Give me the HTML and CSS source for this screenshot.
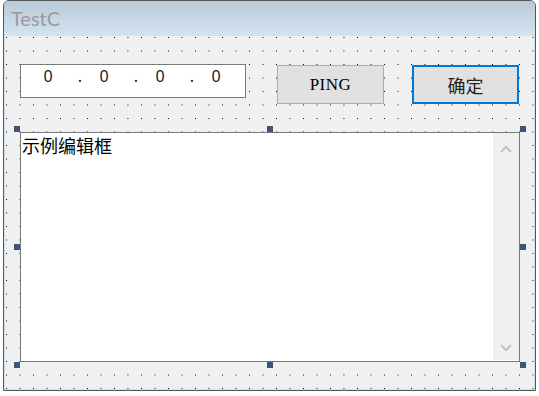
FILE: index.html
```html
<!DOCTYPE html>
<html lang="zh-CN">
<head>
    <meta charset="UTF-8">
    <meta name="viewport" content="width=device-width, initial-scale=1.0">
    <title>TestC</title>
    <link rel="stylesheet" href="styles.css">
</head>
<body>
    <div class="window">
        <div class="titlebar">
            <span class="title">TestC</span>
        </div>

        <div class="client">
            <div class="toprow">
                <div class="ipbox">
                    <span class="oct">0</span><span class="sep">.</span>
                    <span class="oct">0</span><span class="sep">.</span>
                    <span class="oct">0</span><span class="sep">.</span>
                    <span class="oct">0</span>
                </div>
                <button class="btn ping">PING</button>
                <button class="btn ok">确定</button>
            </div>

            <div class="editwrap">
                <div class="edit">
                    <div class="edit-text">示例编辑框</div>
                    <div class="scrollbar">
                        <svg width="12" height="8" viewBox="0 0 12 8"><polyline points="1,7 6,2 11,7" fill="none" stroke="#c2c2c2" stroke-width="2"/></svg>
                        <svg width="12" height="8" viewBox="0 0 12 8"><polyline points="1,1 6,6 11,1" fill="none" stroke="#c2c2c2" stroke-width="2"/></svg>
                    </div>
                </div>
                <!-- alças de seleção do editor -->
                <span class="handle h-tl"></span>
                <span class="handle h-tm"></span>
                <span class="handle h-tr"></span>
                <span class="handle h-ml"></span>
                <span class="handle h-mr"></span>
                <span class="handle h-bl"></span>
                <span class="handle h-bm"></span>
                <span class="handle h-br"></span>
            </div>
        </div>
    </div>
</body>
</html>
```

FILE: styles.css
```css
* {
    box-sizing: border-box;
}

body {
    margin: 0;
    padding: 0;
    background-color: #fff;
    font-family: 'Noto Sans', sans-serif;
}

.window {
    margin-left: 3px;
    width: 533px;
    height: 391px;
    border: 1px solid #555;
    border-radius: 6px 6px 0 0;
    display: flex;
    flex-direction: column;
    overflow: hidden;
}

.titlebar {
    height: 35px;
    flex-shrink: 0;
    padding: 1px 0 0 7px;
    background: linear-gradient(#b9c9d9, #d5e3f0);
}

.title {
    font-family: 'Lato', sans-serif;
    font-size: 20px;
    line-height: 33px;
    color: #9b9b9b;
}

.client {
    flex: 1;
    border: 1px solid #d4e1ee;
    border-top: 0;
    padding: 28px 0 0 15px;
    background-color: #f0f0f0;
    background-image: conic-gradient(at 1px 1px, transparent 75%, #000 0);
    background-size: 13.5px 13.5px;
    background-position: 1px 1px;
}

.toprow {
    display: flex;
    align-items: flex-start;
}

.ipbox {
    width: 226px;
    height: 34px;
    border: 1px solid #7a7a7a;
    background-color: #fff;
    display: flex;
    padding: 1px 0 0 19px;
    font-family: 'Noto Sans', sans-serif;
    font-size: 16px;
    line-height: 20px;
    color: #141c2c;
}

.oct {
    width: 16px;
    text-align: center;
}

.sep {
    width: 8px;
    margin-left: 20px;
    text-align: center;
}

.sep + .oct {
    margin-left: 12px;
}

.btn {
    width: 107px;
    height: 39px;
    margin-top: 1px;
    padding: 0;
    border: 1px solid #adadad;
    background-color: #e1e1e1;
    color: #000;
}

.ping {
    margin-left: 31px;
    font-family: 'Liberation Serif', serif;
    font-size: 17px;
    letter-spacing: 0.5px;
}

.ok {
    margin-left: 28px;
    border: 2px solid #0078d7;
    font-family: 'Noto Sans CJK SC', sans-serif;
    font-size: 18px;
    color: #222;
}

.editwrap {
    position: relative;
    width: 500px;
    height: 230px;
    margin-top: 28px;
}

.edit {
    height: 100%;
    border: 1px solid #787878;
    background-color: #fff;
    display: flex;
}

.edit-text {
    flex: 1;
    padding: 2px 0 0 1px;
    font-family: 'Noto Sans CJK SC', sans-serif;
    font-size: 18px;
    line-height: 20px;
    color: #000;
}

.scrollbar {
    width: 26px;
    margin-bottom: 1px;
    padding: 12px 0 8px;
    background-color: #f0f0f0;
    display: flex;
    flex-direction: column;
    justify-content: space-between;
    align-items: center;
}

.scrollbar svg {
    display: block;
}

.handle {
    position: absolute;
    width: 6px;
    height: 6px;
    background-color: #3d5576;
}

.h-tl { left: -6px; top: -6px; }
.h-tm { left: 247px; top: -6px; }
.h-tr { left: 500px; top: -6px; }
.h-ml { left: -6px; top: 112px; }
.h-mr { left: 500px; top: 112px; }
.h-bl { left: -6px; top: 230px; }
.h-bm { left: 247px; top: 230px; }
.h-br { left: 500px; top: 230px; }
```
